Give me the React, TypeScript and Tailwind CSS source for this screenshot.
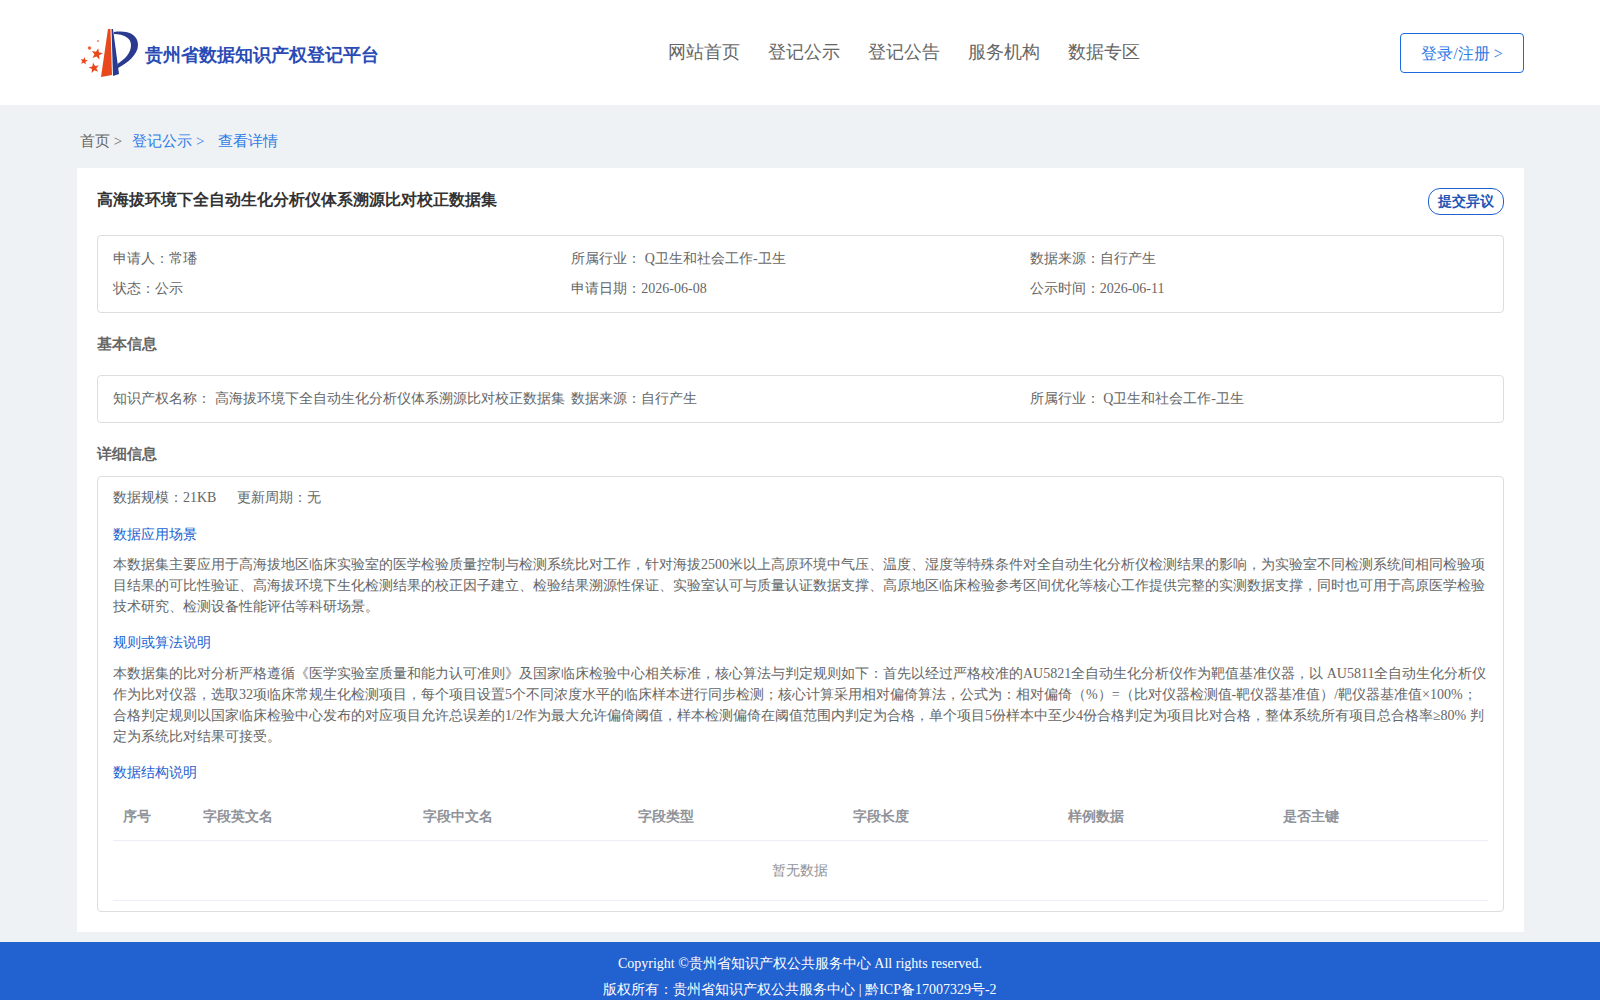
const star = (cx: number, cy: number, r: number, rot: number) =>
  Array.from({ length: 10 }, (_, i) => {
    const a = ((i * 36 + rot - 90) * Math.PI) / 180;
    const d = i % 2 === 0 ? r : r * 0.42;
    return `${(cx + d * Math.cos(a)).toFixed(2)},${(cy + d * Math.sin(a)).toFixed(2)}`;
  }).join(" ");

const Logo = () => (
  <svg width="58" height="50" viewBox="0 0 58 50" className="shrink-0">
    <path d="M27 1 L29.5 1 L31 47 L20 49 Z" fill="#e8481c" />
    <path d="M30.5 1 L32 1 L38 46 L32 48 Z" fill="#2a3a8f" />
    <path d="M33 4 C46 2 57 6 57 17 C57 27 46 35 37 40 L36.5 36 C44 31 50 25 50 17 C50 10 43 6 33 6 Z" fill="#2a3a8f" />
    <polygon points={star(16, 26, 6, 12)} fill="#e8481c" />
    <polygon points={star(13, 40, 5.5, -10)} fill="#e8481c" />
    <polygon points={star(3, 33, 4, 10)} fill="#e8481c" />
    <circle cx="8.5" cy="20" r="1.8" fill="#ea6a45" />
    <circle cx="17" cy="13" r="1.1" fill="#ee8a6a" />
  </svg>
);

const nav = ["网站首页", "登记公示", "登记公告", "服务机构", "数据专区"];
const columns = ["序号", "字段英文名", "字段中文名", "字段类型", "字段长度", "样例数据", "是否主键"];

export default function App() {
  return (
    <div className="min-h-[1000px] overflow-hidden bg-[#eff2f5] text-[14px] text-[#666] font-['Liberation_Serif',serif]">
      <header className="flex h-[105px] items-start bg-white pl-[81px] pr-[76px]">
        <div className="mt-[28px] flex items-center">
          <Logo />
          <span className="ml-[6px] mt-[5px] text-[18px] font-bold text-[#2a4bb5]">贵州省数据知识产权登记平台</span>
        </div>
        <nav className="ml-[289px] mt-[39px] flex gap-[28px] text-[18px] leading-[26px] text-[#666]">
          {nav.map((n) => <span key={n}>{n}</span>)}
        </nav>
        <button className="ml-auto mt-[33px] h-[40px] w-[124px] rounded-[4px] border border-[#1a6be0] pt-[2px] text-[16px] text-[#2d7be5]">登录/注册 &gt;</button>
      </header>

      <div className="flex h-[63px] items-center pl-[80px] pt-[8px] text-[15px] leading-[20px]">
        <span>首页 &gt;</span>
        <span className="ml-[10px] text-[#2d7be5]">登记公示 &gt;</span>
        <span className="ml-[14px] text-[#2d7be5]">查看详情</span>
      </div>

      <main className="ml-[77px] mr-[76px] bg-white px-[20px] pb-[20px] pt-[20px]">
        <div className="flex h-[26px] items-start justify-between">
          <h1 className="text-[16px] font-bold leading-[24px] text-[#333]">高海拔环境下全自动生化分析仪体系溯源比对校正数据集</h1>
          <button className="h-[27px] w-[76px] rounded-[12px] border border-[#2060d0] text-[14px] font-bold text-[#2155b5]">提交异议</button>
        </div>

        <section className="mt-[21px] rounded-[4px] border border-[#ddd] px-[15px] py-[8px]">
          <div className="grid grid-cols-3 leading-[30px]">
            <span>申请人：常璠</span>
            <span>所属行业： Q卫生和社会工作-卫生</span>
            <span>数据来源：自行产生</span>
            <span>状态：公示</span>
            <span>申请日期：2026-06-08</span>
            <span>公示时间：2026-06-11</span>
          </div>
        </section>

        <h2 className="mt-[20px] text-[15px] font-bold leading-[22px] text-[#666]">基本信息</h2>

        <section className="mt-[20px] rounded-[4px] border border-[#ddd] px-[15px] py-[8px]">
          <div className="grid grid-cols-3 leading-[30px]">
            <span className="whitespace-nowrap">知识产权名称： 高海拔环境下全自动生化分析仪体系溯源比对校正数据集</span>
            <span>数据来源：自行产生</span>
            <span>所属行业： Q卫生和社会工作-卫生</span>
          </div>
        </section>

        <h2 className="mt-[20px] text-[15px] font-bold leading-[22px] text-[#666]">详细信息</h2>

        <section className="mt-[11px] rounded-[4px] border border-[#ddd] px-[15px] pb-[10px] pt-[6px]">
          <div className="flex gap-[21px] leading-[30px]">
            <span>数据规模：21KB</span>
            <span>更新周期：无</span>
          </div>
          <h3 className="mt-[10px] text-[14px] font-normal leading-[24px] text-[#2161d0]">数据应用场景</h3>
          <p className="mt-[7px] leading-[21px]">本数据集主要应用于高海拔地区临床实验室的医学检验质量控制与检测系统比对工作，针对海拔2500米以上高原环境中气压、温度、湿度等特殊条件对全自动生化分析仪检测结果的影响，为实验室不同检测系统间相同检验项目结果的可比性验证、高海拔环境下生化检测结果的校正因子建立、检验结果溯源性保证、实验室认可与质量认证数据支撑、高原地区临床检验参考区间优化等核心工作提供完整的实测数据支撑，同时也可用于高原医学检验技术研究、检测设备性能评估等科研场景。</p>
          <h3 className="mt-[14px] text-[14px] font-normal leading-[24px] text-[#2161d0]">规则或算法说明</h3>
          <p className="mt-[8px] leading-[21px]">本数据集的比对分析严格遵循《医学实验室质量和能力认可准则》及国家临床检验中心相关标准，核心算法与判定规则如下：首先以经过严格校准的AU5821全自动生化分析仪作为靶值基准仪器，以 AU5811全自动生化分析仪作为比对仪器，选取32项临床常规生化检测项目，每个项目设置5个不同浓度水平的临床样本进行同步检测；核心计算采用相对偏倚算法，公式为：相对偏倚（%）=（比对仪器检测值-靶仪器基准值）/靶仪器基准值×100%；合格判定规则以国家临床检验中心发布的对应项目允许总误差的1/2作为最大允许偏倚阈值，样本检测偏倚在阈值范围内判定为合格，单个项目5份样本中至少4份合格判定为项目比对合格，整体系统所有项目总合格率≥80% 判定为系统比对结果可接受。</p>
          <h3 className="mt-[14px] text-[14px] font-normal leading-[24px] text-[#2161d0]">数据结构说明</h3>
          <div className="mt-[7px]">
            <div className="grid h-[49px] grid-cols-[80px_220px_repeat(5,1fr)] items-center border-b border-[#ebeef5] font-bold text-[#909399]">
              {columns.map((c) => <span key={c} className="px-[10px]">{c}</span>)}
            </div>
            <div className="flex h-[60px] items-center justify-center border-b border-[#ebeef5] pr-[2px] text-[#909399]">暂无数据</div>
          </div>
        </section>
      </main>

      <footer className="mt-[10px] h-[58px] bg-[#2161d0] pt-[9px] text-center leading-[26px] text-white">
        <div>Copyright ©贵州省知识产权公共服务中心 All rights reserved.</div>
        <div>版权所有：贵州省知识产权公共服务中心 | 黔ICP备17007329号-2</div>
      </footer>
    </div>
  );
}
